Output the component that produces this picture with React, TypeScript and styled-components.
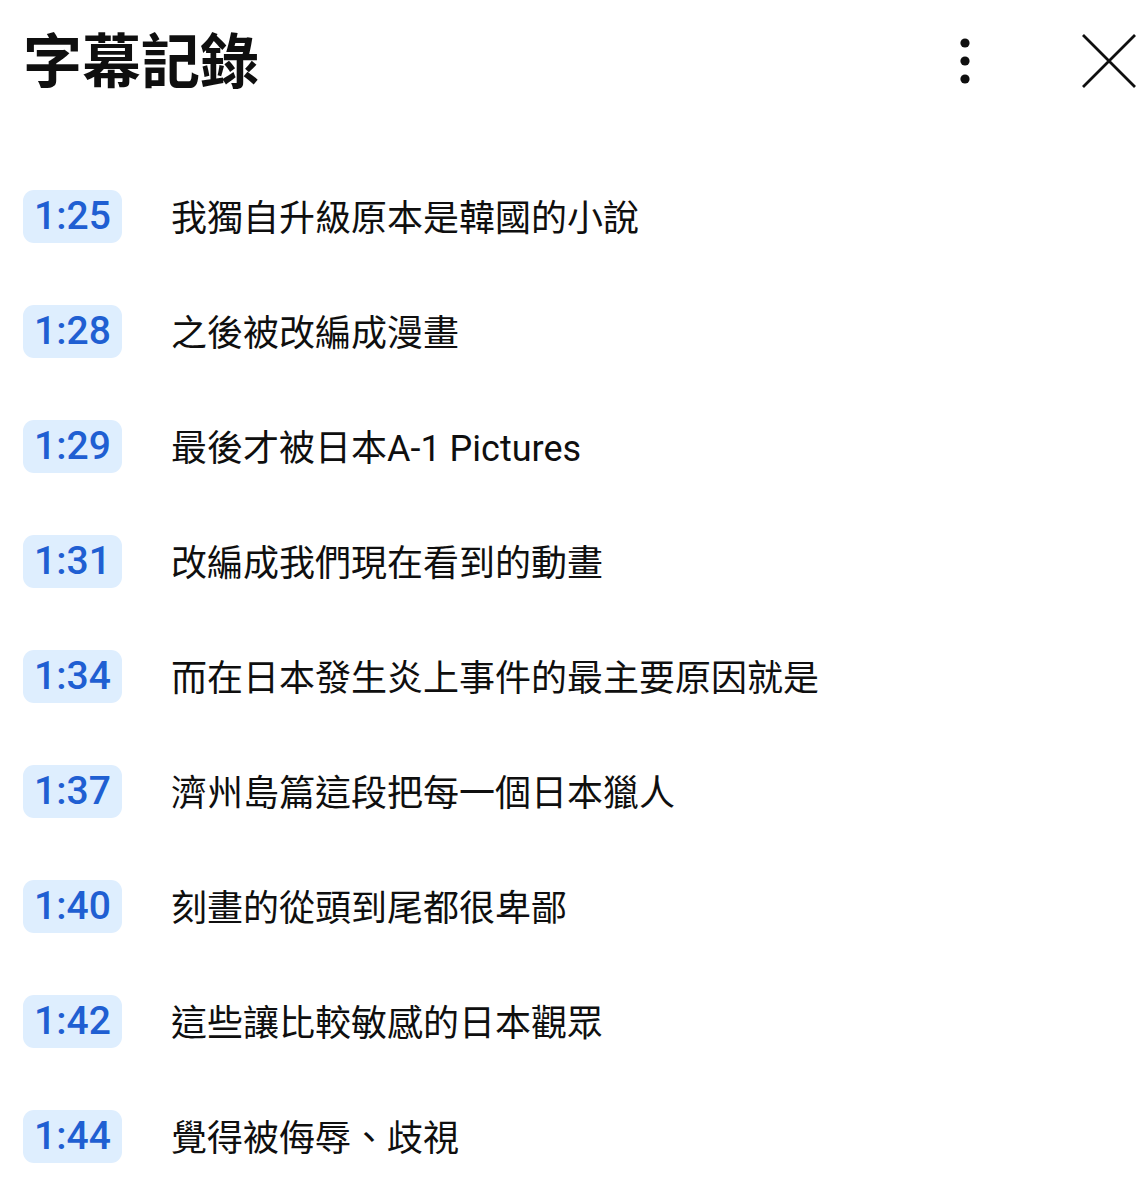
import { createGlobalStyle } from 'styled-components';
import styled from 'styled-components';

interface Segment {
  time: string
  text: string
}

const segments: Segment[] = [
  { time: '1:25', text: '我獨自升級原本是韓國的小說' },
  { time: '1:28', text: '之後被改編成漫畫' },
  { time: '1:29', text: '最後才被日本A-1 Pictures' },
  { time: '1:31', text: '改編成我們現在看到的動畫' },
  { time: '1:34', text: '而在日本發生炎上事件的最主要原因就是' },
  { time: '1:37', text: '濟州島篇這段把每一個日本獵人' },
  { time: '1:40', text: '刻畫的從頭到尾都很卑鄙' },
  { time: '1:42', text: '這些讓比較敏感的日本觀眾' },
  { time: '1:44', text: '覺得被侮辱、歧視' },
]

const GlobalStyle = createGlobalStyle`
  body {
    margin: 0;
    background: #fff;
    font-family: Roboto, "Noto Sans CJK TC", sans-serif;
    color: #0f0f0f;
  }
`

const Panel = styled.div`
  width: 1144px;
  height: 1188px;
  overflow: hidden;
  background: #fff;
`

const Header = styled.header`
  display: flex;
  align-items: center;
  height: 122px;
  padding: 0 5px 0 23px;
`

const Title = styled.h1`
  flex: 1;
  margin: 0 0 8px;
  font-family: "Noto Sans CJK TC", sans-serif;
  font-size: 59px;
  font-weight: 700;
  line-height: 1;
  letter-spacing: 0;
`

const IconButton = styled.button<{ $width: number }>`
  display: flex;
  align-items: center;
  justify-content: center;
  width: ${p => p.$width}px;
  height: 70px;
  padding: 0;
  border: 0;
  background: none;
  cursor: pointer;
  color: #0f0f0f;
`

const List = styled.div`
  padding-top: 37px;
`

const Row = styled.div`
  display: flex;
  align-items: center;
  height: 115px;
  padding-left: 23px;
`

const Stamp = styled.div`
  display: flex;
  align-items: center;
  justify-content: center;
  box-sizing: border-box;
  width: 99px;
  height: 53px;
  border-radius: 11px;
  background: #deeefe;
  color: #1f5fd2;
  font-family: Roboto, sans-serif;
  font-size: 39px;
  font-weight: 500;
  line-height: 1;
`

const Text = styled.div`
  margin: 6px 0 0 49px;
  font-family: Roboto, "Noto Sans CJK TC", sans-serif;
  font-size: 36px;
  line-height: 1.3;
  color: #0f0f0f;
`

const MoreIcon = () => (
  <svg width="12" height="48" viewBox="0 0 12 48">
    <circle cx="6" cy="6" r="4.6" fill="currentColor" />
    <circle cx="6" cy="24" r="4.6" fill="currentColor" />
    <circle cx="6" cy="42" r="4.6" fill="currentColor" />
  </svg>
)

const CloseIcon = () => (
  <svg width="54" height="54" viewBox="0 0 54 54">
    <path d="M1 1 L53 53 M53 1 L1 53" stroke="currentColor" strokeWidth="2.8" fill="none" />
  </svg>
)

export default function App() {
  return <Panel>
    <GlobalStyle />
    <Header>
      <Title>字幕記錄</Title>
      <IconButton $width={60}><MoreIcon /></IconButton>
      <IconButton $width={84} />
      <IconButton $width={60}><CloseIcon /></IconButton>
    </Header>
    <List>
      {segments.map(s => <Row key={s.time}>
        <Stamp>{s.time}</Stamp>
        <Text>{s.text}</Text>
      </Row>)}
    </List>
  </Panel>
}
